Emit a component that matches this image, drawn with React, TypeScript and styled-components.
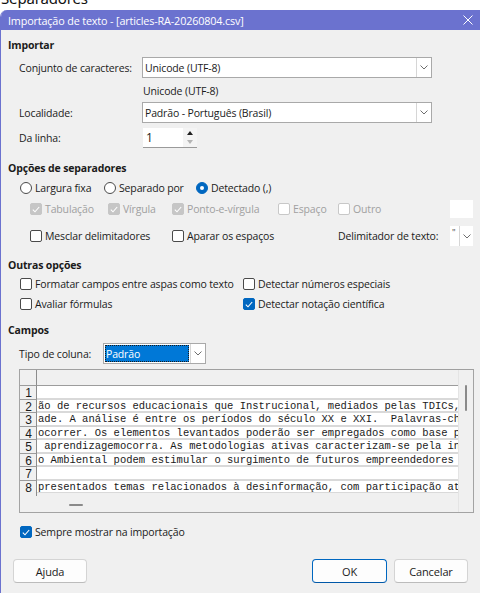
import React from 'react';
import styled, { createGlobalStyle } from 'styled-components';

const GlobalStyle = createGlobalStyle`
  html, body { margin: 0; padding: 0; background: #ffffff; }
  body {
    font-family: "Open Sans", "Noto Sans", sans-serif;
    font-size: 10.5px;
    letter-spacing: -0.15px;
    color: #1b1b1b;
    overflow: hidden;
  }
  * { box-sizing: border-box; }
`;

const Page = styled.div`
  display: flex;
  flex-direction: column;
  height: 100vh;
`;

const Backdrop = styled.div`
  height: 10px;
  overflow: hidden;
  padding-left: 1px;
`;

const BackdropText = styled.div`
  font-family: "Noto Sans", sans-serif;
  font-size: 15px;
  line-height: 15px;
  transform: translateY(-9px);
  color: #111;
`;

const Dialog = styled.div`
  flex: 1;
  display: flex;
  flex-direction: column;
  background: #f0f0f0;
  border-left: 1px solid #6b72cf;
  border-top-left-radius: 7px;
  overflow: hidden;
`;

const TitleBar = styled.div`
  height: 20px;
  flex-shrink: 0;
  display: flex;
  align-items: center;
  justify-content: space-between;
  background: #6b72cf;
  color: #ffffff;
  padding: 0 7px 0 7px;
`;

const Title = styled.span`
  font-size: 10.8px;
  line-height: 16px;
  padding-top: 1px;
`;

const Body = styled.div`
  display: flex;
  flex-direction: column;
  padding: 0 7px 0 7px;
`;

const SectionTitle = styled.div<{ $mt: number }>`
  font-weight: 700;
  line-height: 16px;
  margin-top: ${(p) => p.$mt}px;
`;

const FieldRow = styled.div<{ $label: number; $mt: number }>`
  display: grid;
  grid-template-columns: ${(p) => p.$label}px auto;
  align-items: center;
  padding-left: 11px;
  margin-top: ${(p) => p.$mt}px;
  line-height: 16px;
`;

const Combo = styled.div<{ $w: number }>`
  display: flex;
  width: ${(p) => p.$w}px;
  height: 21px;
  background: #ffffff;
  border: 1px solid #a9a9a9;
`;

const ComboText = styled.div`
  flex: 1;
  display: flex;
  align-items: center;
  padding-left: 2px;
  white-space: nowrap;
  overflow: hidden;
`;

const ComboButton = styled.div<{ $w?: number }>`
  width: ${(p) => p.$w ?? 15}px;
  display: flex;
  align-items: center;
  justify-content: center;
  border-left: 1px solid #d6d6d6;
  background: #ffffff;
  color: #6e6e6e;
`;

const SelectedValue = styled.div`
  flex: 1;
  margin: 1px;
  display: flex;
  align-items: center;
  padding-left: 1px;
  background: #0078d7;
  color: #ffffff;
  outline: 1px dotted #1a1a1a;
  outline-offset: -1px;
`;

const StaticValue = styled.div`
  padding-left: 1px;
`;

const Spin = styled.div`
  display: flex;
  width: 54px;
  height: 20px;
  background: #ffffff;
  border-bottom: 1px solid #9a9a9a;
`;

const SpinText = styled.div`
  flex: 1;
  display: flex;
  align-items: center;
  padding-left: 3px;
  font-size: 12px;
`;

const SpinButtons = styled.div`
  width: 14px;
  display: flex;
  flex-direction: column;
  background: #f4f4f4;
`;

const SpinArrow = styled.div<{ $dim?: boolean }>`
  flex: 1;
  display: flex;
  align-items: center;
  justify-content: center;
  color: ${(p) => (p.$dim ? '#b5b5b5' : '#202020')};
`;

const OptionRow = styled.div<{ $indent: number; $mt: number; $h?: number }>`
  display: flex;
  align-items: center;
  padding-left: ${(p) => p.$indent}px;
  margin-top: ${(p) => p.$mt}px;
  height: ${(p) => p.$h ?? 16}px;
  line-height: 16px;
`;

const OptionGrid = styled.div`
  display: grid;
  grid-template-columns: 223px auto;
  row-gap: 4px;
  padding-left: 12px;
  margin-top: 3px;
  line-height: 16px;
`;

const Option = styled.div<{ $w?: number; $disabled?: boolean }>`
  display: flex;
  align-items: center;
  gap: 3px;
  flex-shrink: 0;
  width: ${(p) => (p.$w ? `${p.$w}px` : 'auto')};
  color: ${(p) => (p.$disabled ? '#a0a0a0' : 'inherit')};
  white-space: nowrap;
`;

type BoxState = 'on' | 'off' | 'disabledOn' | 'disabledOff';

const Box = styled.span<{ $state: BoxState }>`
  width: 12px;
  height: 12px;
  flex-shrink: 0;
  border-radius: 2px;
  display: flex;
  align-items: center;
  justify-content: center;
  background: ${(p) =>
    p.$state === 'on' ? '#0067c0' : p.$state === 'disabledOn' ? '#c6c6c6' : '#ffffff'};
  border: 1px solid
    ${(p) =>
      p.$state === 'on'
        ? '#0067c0'
        : p.$state === 'disabledOn'
        ? '#c6c6c6'
        : p.$state === 'disabledOff'
        ? '#c8c8c8'
        : '#4a4a4a'};
`;

const Radio = styled.span<{ $on?: boolean }>`
  width: 12px;
  height: 12px;
  flex-shrink: 0;
  border-radius: 50%;
  display: flex;
  align-items: center;
  justify-content: center;
  background: ${(p) => (p.$on ? '#0067c0' : '#ffffff')};
  border: 1px solid ${(p) => (p.$on ? '#0067c0' : '#4a4a4a')};
`;

const RadioDot = styled.span`
  width: 4px;
  height: 4px;
  border-radius: 50%;
  background: #ffffff;
`;

const Spacer = styled.div`
  flex: 1;
`;

const BlankField = styled.div`
  width: 23px;
  height: 18px;
  background: #ffffff;
`;

const QuoteCombo = styled.div`
  display: flex;
  width: 23px;
  height: 20px;
  background: #ffffff;
`;

const QuoteText = styled.div`
  flex: 1;
  padding-left: 2px;
  font-size: 9px;
  line-height: 14px;
  color: #444;
`;

/* preview grid */

const Preview = styled.div`
  margin: 5px 0 0 11px;
  width: 455px;
  height: 144px;
  display: grid;
  grid-template-columns: 1fr 15px;
  grid-template-rows: 1fr 19px;
  border: 1px solid #a3a3a3;
  border-top-color: #a0a0a0;
  background: #f0f0f0;
`;

const Sheet = styled.div`
  display: flex;
  flex-direction: column;
  overflow: hidden;
`;

const SheetRow = styled.div<{ $header?: boolean }>`
  display: flex;
  height: ${(p) => (p.$header ? '16px' : '13.5px')};
  flex-shrink: 0;
`;

const RowNum = styled.div<{ $header?: boolean }>`
  width: 17px;
  flex-shrink: 0;
  background: #f0f0f0;
  border-right: 1px solid #8c8c8c;
  border-bottom: 1px solid #9c9c9c;
  font-family: "Liberation Sans", sans-serif;
  font-size: 12px;
  letter-spacing: 0;
  line-height: 14px;
  text-align: center;
  padding-left: 1px;
  color: #1a1a1a;
`;

const Cell = styled.div<{ $header?: boolean }>`
  flex: 1;
  background: ${(p) => (p.$header ? '#f0f0f0' : '#ffffff')};
  border-bottom: ${(p) => (p.$header ? '1px solid #9c9c9c' : '2px solid #d9d9d9')};
  font-family: "Liberation Mono", monospace;
  font-size: 10.5px;
  letter-spacing: 0;
  line-height: 13px;
  white-space: pre;
  overflow: hidden;
  padding-left: 1px;
  color: #1a1a1a;
`;

const VScroll = styled.div`
  grid-row: 1 / span 2;
  grid-column: 2;
  display: flex;
  justify-content: center;
  padding-top: 15px;
  border-left: 1px solid #e4e4e4;
`;

const VThumb = styled.div`
  width: 2px;
  height: 26px;
  background: #8a8a8a;
  border-radius: 1px;
`;

const HScroll = styled.div`
  grid-row: 2;
  grid-column: 1;
  display: flex;
  align-items: center;
`;

const HRowStub = styled.div`
  width: 17px;
  align-self: flex-start;
  height: 3px;
  border-right: 1px solid #8c8c8c;
`;

const HThumb = styled.div`
  width: 14px;
  height: 2px;
  margin-left: 32px;
  margin-top: 5px;
  background: #8a8a8a;
  border-radius: 1px;
`;

const Footer = styled.div`
  display: flex;
  align-items: center;
  padding: 0 5px;
  margin-top: 19px;
`;

const Button = styled.div<{ $primary?: boolean; $w: number }>`
  width: ${(p) => p.$w}px;
  height: 24px;
  display: flex;
  align-items: center;
  justify-content: center;
  background: #fdfdfd;
  border: 1px solid ${(p) => (p.$primary ? '#0067c0' : '#d4d4d4')};
  border-bottom-color: ${(p) => (p.$primary ? '#0058a8' : '#bcbcbc')};
  border-radius: 4px;
  font-size: 11px;
  color: #1b1b1b;
`;

const ButtonGap = styled.div`
  width: 7px;
`;

/* drawings */

const Chevron = () => (
  <svg width="8" height="5" viewBox="0 0 8 5" aria-hidden>
    <polyline points="0.5,0.5 4,4 7.5,0.5" fill="none" stroke="currentColor" strokeWidth="1" />
  </svg>
);

const Tick = () => (
  <svg width="8" height="7" viewBox="0 0 8 7" aria-hidden>
    <polyline points="0.8,3.6 3,5.8 7.2,1" fill="none" stroke="#ffffff" strokeWidth="1.1" />
  </svg>
);

const CloseIcon = () => (
  <svg width="10" height="10" viewBox="0 0 10 10" aria-hidden>
    <path d="M0.5 0.5 L9.5 9.5 M9.5 0.5 L0.5 9.5" stroke="#ffffff" strokeWidth="1" />
  </svg>
);

const TriUp = () => (
  <svg width="6" height="4" viewBox="0 0 6 4" aria-hidden>
    <polygon points="0,4 3,0 6,4" fill="currentColor" />
  </svg>
);

const TriDown = () => (
  <svg width="6" height="4" viewBox="0 0 6 4" aria-hidden>
    <polygon points="0,0 6,0 3,4" fill="currentColor" />
  </svg>
);

const Check: React.FC<{ state: BoxState; label: string; w?: number }> = ({ state, label, w }) => (
  <Option $w={w} $disabled={state === 'disabledOn' || state === 'disabledOff'}>
    <Box $state={state}>{(state === 'on' || state === 'disabledOn') && <Tick />}</Box>
    <span>{label}</span>
  </Option>
);

const RadioOption: React.FC<{ on?: boolean; label: string; w?: number }> = ({ on, label, w }) => (
  <Option $w={w}>
    <Radio $on={on}>{on && <RadioDot />}</Radio>
    <span>{label}</span>
  </Option>
);

const LINES = [
  '',
  'ão de recursos educacionais que Instrucional, mediados pelas TDICs, como ferramentas',
  'ade. A análise é entre os períodos do século XX e XXI.  Palavras-chave: educação',
  'ocorrer. Os elementos levantados poderão ser empregados como base para estudos',
  ' aprendizagemocorra. As metodologias ativas caracterizam-se pela inserção do aluno',
  'o Ambiental podem estimular o surgimento de futuros empreendedores sociais',
  '',
  'presentados temas relacionados à desinformação, com participação ativa dos alunos',
];

export default function App() {
  return (
    <Page>
      <GlobalStyle />
      <Backdrop>
        <BackdropText>Separadores</BackdropText>
      </Backdrop>
      <Dialog>
        <TitleBar>
          <Title>Importação de texto - [articles-RA-20260804.csv]</Title>
          <CloseIcon />
        </TitleBar>
        <Body>
          <SectionTitle $mt={7}>Importar</SectionTitle>
          <FieldRow $label={123} $mt={4}>
            <span>Conjunto de caracteres:</span>
            <Combo $w={290}>
              <ComboText>Unicode (UTF-8)</ComboText>
              <ComboButton>
                <Chevron />
              </ComboButton>
            </Combo>
          </FieldRow>
          <FieldRow $label={123} $mt={5}>
            <span />
            <StaticValue>Unicode (UTF-8)</StaticValue>
          </FieldRow>
          <FieldRow $label={123} $mt={3}>
            <span>Localidade:</span>
            <Combo $w={290}>
              <ComboText>Padrão - Português (Brasil)</ComboText>
              <ComboButton>
                <Chevron />
              </ComboButton>
            </Combo>
          </FieldRow>
          <FieldRow $label={124} $mt={5}>
            <span>Da linha:</span>
            <Spin>
              <SpinText>1</SpinText>
              <SpinButtons>
                <SpinArrow>
                  <TriUp />
                </SpinArrow>
                <SpinArrow $dim>
                  <TriDown />
                </SpinArrow>
              </SpinButtons>
            </Spin>
          </FieldRow>

          <SectionTitle $mt={12}>Opções de separadores</SectionTitle>
          <OptionRow $indent={12} $mt={4}>
            <RadioOption label="Largura fixa" w={84} />
            <RadioOption label="Separado por" w={92} />
            <RadioOption on label="Detectado (,)" />
          </OptionRow>
          <OptionRow $indent={22} $mt={4} $h={18}>
            <Check state="disabledOn" label="Tabulação" w={78} />
            <Check state="disabledOn" label="Vírgula" w={64} />
            <Check state="disabledOn" label="Ponto-e-vírgula" w={106} />
            <Check state="disabledOff" label="Espaço" w={60} />
            <Check state="disabledOff" label="Outro" />
            <Spacer />
            <BlankField />
          </OptionRow>
          <OptionRow $indent={22} $mt={8} $h={20}>
            <Check state="off" label="Mesclar delimitadores" w={142} />
            <Check state="off" label="Aparar os espaços" w={166} />
            <span>Delimitador de texto:</span>
            <Spacer />
            <QuoteCombo>
              <QuoteText>"</QuoteText>
              <ComboButton $w={14}>
                <Chevron />
              </ComboButton>
            </QuoteCombo>
          </OptionRow>

          <SectionTitle $mt={11}>Outras opções</SectionTitle>
          <OptionGrid>
            <Check state="off" label="Formatar campos entre aspas como texto" />
            <Check state="off" label="Detectar números especiais" />
            <Check state="off" label="Avaliar fórmulas" />
            <Check state="on" label="Detectar notação científica" />
          </OptionGrid>

          <SectionTitle $mt={10}>Campos</SectionTitle>
          <FieldRow $label={84} $mt={5}>
            <span>Tipo de coluna:</span>
            <Combo $w={103}>
              <SelectedValue>Padrão</SelectedValue>
              <ComboButton>
                <Chevron />
              </ComboButton>
            </Combo>
          </FieldRow>

          <Preview>
            <Sheet>
              <SheetRow $header>
                <RowNum $header />
                <Cell $header />
              </SheetRow>
              {LINES.map((line, i) => (
                <SheetRow key={i}>
                  <RowNum>{i + 1}</RowNum>
                  <Cell>{line}</Cell>
                </SheetRow>
              ))}
            </Sheet>
            <VScroll>
              <VThumb />
            </VScroll>
            <HScroll>
              <HRowStub />
              <HThumb />
            </HScroll>
          </Preview>

          <OptionRow $indent={12} $mt={11}>
            <Check state="on" label="Sempre mostrar na importação" />
          </OptionRow>

          <Footer>
            <Button $w={74}>Ajuda</Button>
            <Spacer />
            <Button $w={75} $primary>
              OK
            </Button>
            <ButtonGap />
            <Button $w={74}>Cancelar</Button>
          </Footer>
        </Body>
      </Dialog>
    </Page>
  );
}
